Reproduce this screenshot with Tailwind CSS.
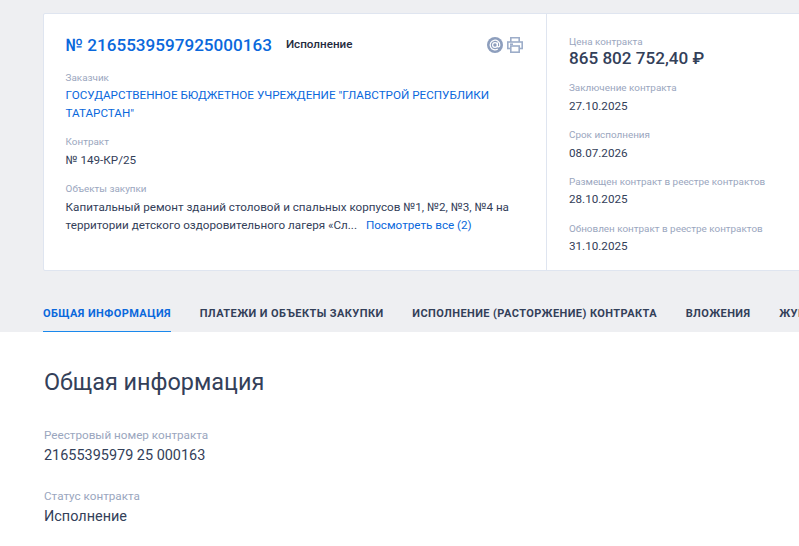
<!DOCTYPE html>
<html lang="ru">
<head>
    <meta charset="UTF-8" />
    <title>Контракт</title>
    <script src="https://cdn.jsdelivr.net/npm/@tailwindcss/browser@4"></script>
</head>
<body class="w-[799px] h-[546px] overflow-hidden bg-white font-['Roboto',sans-serif] text-[#334059]">

    <div class="bg-[#eeeff2] h-[332px] pt-[13px] overflow-hidden">
        <div class="ml-[43px] w-[800px] h-[258px] flex bg-white border border-[#dfe5f0] rounded-[2px]">
            <div class="w-[503px] shrink-0 pl-[21.6px] pr-[23px] border-r border-[#dfe5f0]">
                <div class="flex items-center h-[22px] mt-[20px]">
                    <span class="text-[17.1px] leading-[22px] font-medium text-[#0a68dc] whitespace-nowrap">№ 2165539597925000163</span>
                    <span class="ml-[14px] text-[11.65px] font-medium text-[#1f2b3e]">Исполнение</span>
                    <div class="ml-auto flex items-center gap-[4px]">
                        <svg width="16" height="16" viewBox="0 0 16 16"><circle cx="8" cy="8" r="8" fill="#8d9ebd"/><circle cx="8" cy="8" r="2.4" fill="none" stroke="#fff" stroke-width="1.2"/><path d="M10.4 5.6v3.2c0 1.6 2.4 1.6 2.4-.8a4.8 4.8 0 1 0-2 3.9" fill="none" stroke="#fff" stroke-width="1.2"/></svg>
                        <svg width="16" height="16" viewBox="0 0 16 16" fill="none" stroke="#9dadc9" stroke-width="1.6"><path d="M3.8 5V.8h8.4V5"/><rect x="0.8" y="5" width="14.4" height="6.5"/><rect x="3.8" y="9" width="8.4" height="6.2" fill="#fff"/><path d="M3 7.2h3"/></svg>
                    </div>
                </div>
                <div class="mt-[15px] text-[9.9px] leading-[13px] text-[#9aa6be]">Заказчик</div>
                <div class="mt-[1.5px] text-[11.67px] leading-[18px] text-[#0a68dc]">ГОСУДАРСТВЕННОЕ БЮДЖЕТНОЕ УЧРЕЖДЕНИЕ "ГЛАВСТРОЙ РЕСПУБЛИКИ<br>ТАТАРСТАН"</div>
                <div class="mt-[13.5px] text-[9.9px] leading-[13px] text-[#9aa6be]">Контракт</div>
                <div class="mt-[3px] text-[11.67px] leading-[18px]">№ 149-КР/25</div>
                <div class="mt-[13px] text-[9.9px] leading-[13px] text-[#9aa6be]">Объекты закупки</div>
                <div class="mt-[2.5px] text-[11.67px] leading-[18px]">Капитальный ремонт зданий столовой и спальных корпусов №1, №2, №3, №4 на<br>территории детского оздоровительного лагеря «Сл... <a class="ml-[6px] text-[#0a68dc]">Посмотреть все (2)</a></div>
            </div>
            <div class="pl-[22px] pt-[21px]">
                <div class="text-[9.9px] leading-[13px] text-[#9aa6be]">Цена контракта</div>
                <div class="text-[17.1px] leading-[21px] font-medium">865 802 752,40 ₽</div>
                <div class="mt-[12px] text-[9.9px] leading-[13px] text-[#9aa6be]">Заключение контракта</div>
                <div class="mt-[3px] text-[11.67px] leading-[18px]">27.10.2025</div>
                <div class="mt-[13px] text-[9.9px] leading-[13px] text-[#9aa6be]">Срок исполнения</div>
                <div class="mt-[3px] text-[11.67px] leading-[18px]">08.07.2026</div>
                <div class="mt-[13px] text-[9.9px] leading-[13px] text-[#9aa6be]">Размещен контракт в реестре контрактов</div>
                <div class="mt-[2px] text-[11.67px] leading-[18px]">28.10.2025</div>
                <div class="mt-[14px] text-[9.9px] leading-[13px] text-[#9aa6be]">Обновлен контракт в реестре контрактов</div>
                <div class="mt-[2px] text-[11.67px] leading-[18px]">31.10.2025</div>
            </div>
        </div>
        <nav class="ml-[43px] mt-[20px] flex gap-[28.7px] text-[11px] font-bold tracking-[0.42px] whitespace-nowrap">
            <a class="h-[41px] leading-[46px] text-[#0a68dc] border-b border-[#1a88ec]">ОБЩАЯ ИНФОРМАЦИЯ</a>
            <a class="leading-[46px]">ПЛАТЕЖИ И ОБЪЕКТЫ ЗАКУПКИ</a>
            <a class="leading-[46px]">ИСПОЛНЕНИЕ (РАСТОРЖЕНИЕ) КОНТРАКТА</a>
            <a class="leading-[46px]">ВЛОЖЕНИЯ</a>
            <a class="leading-[46px]">ЖУРНАЛ СОБЫТИЙ</a>
        </nav>
    </div>

    <div class="pl-[44px]">
        <h2 class="pt-[35px] text-[23.4px] leading-[30px]">Общая информация</h2>
        <div class="mt-[31px] text-[11.7px] leading-[14px] text-[#9aa6be]">Реестровый номер контракта</div>
        <div class="mt-[4px] text-[14.45px] leading-[20px]">21655395979 25 000163</div>
        <div class="mt-[23px] text-[11.7px] leading-[14px] text-[#9aa6be]">Статус контракта</div>
        <div class="mt-[4px] text-[14.45px] leading-[20px]">Исполнение</div>
    </div>

</body>
</html>
